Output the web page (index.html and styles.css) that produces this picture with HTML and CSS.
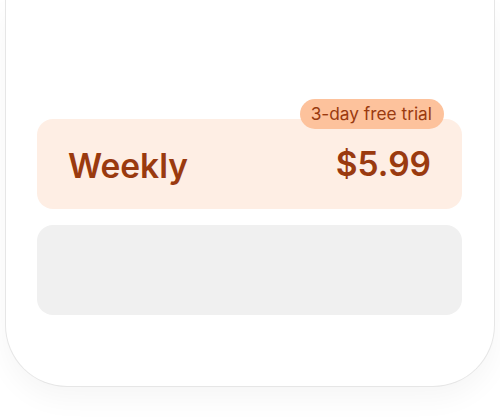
FILE: index.html
```html
<!DOCTYPE html>
<html>
<head>
<meta charset="utf-8">
<link rel="stylesheet" href="styles.css">
</head>
<body>
<div class="phone">
  <div class="plans">
    <div class="plan plan-active">
      <span class="badge">3-day free trial</span>
      <span class="plan-name">Weekly</span>
      <span class="plan-price">$5.99</span>
    </div>
    <div class="plan plan-empty"></div>
  </div>
</div>
</body>
</html>
```
FILE: styles.css
```css
html, body {
  margin: 0;
  padding: 0;
  background: #ffffff;
  font-family: Inter, "Noto Sans", sans-serif;
}
body {
  width: 500px;
  height: 417px;
  overflow: hidden;
}
.phone {
  box-sizing: border-box;
  margin: 0 5px;
  height: 387px;
  background: #ffffff;
  border: 1px solid #e6e6e6;
  border-top: none;
  border-radius: 0 0 62px 62px;
  box-shadow: 0 12px 28px rgba(0, 0, 0, 0.04);
  padding: 119px 32px 0 31px;
}
.plans {
  display: flex;
  flex-direction: column;
  gap: 16px;
}
.plan {
  position: relative;
  height: 90px;
  border-radius: 16px;
  box-sizing: border-box;
}
.plan-active {
  background: #feeee4;
  display: flex;
  align-items: center;
  justify-content: space-between;
  padding: 0 31px 0 31px;
  color: #9a3a0f;
}
.plan-empty {
  background: #f0f0f0;
}
.plan-name {
  font-size: 33.5px;
  font-weight: 600;
  margin-top: 4px;
}
.plan-price {
  font-size: 33.5px;
  font-weight: 600;
  margin-top: -1px;
}
.badge {
  position: absolute;
  top: -20px;
  right: 18px;
  height: 30px;
  line-height: 30px;
  padding: 0 12px 0 11px;
  border-radius: 15px;
  background: #fdc29c;
  color: #9a3a0f;
  font-size: 17.3px;
  font-weight: 400;
}
```
